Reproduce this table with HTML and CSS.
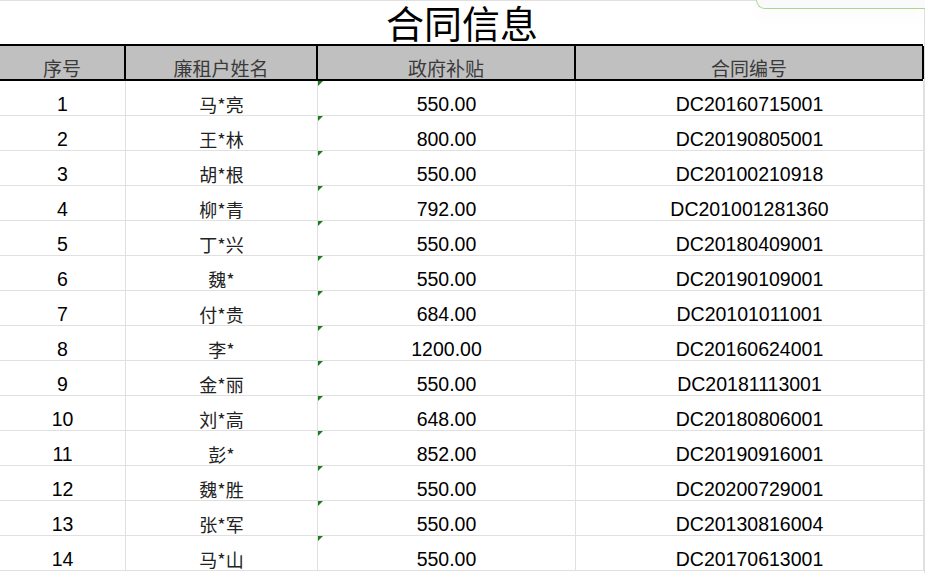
FILE: index.html
```html
<!DOCTYPE html>
<html lang="zh">
<head>
<meta charset="utf-8">
<link rel="stylesheet" href="styles.css">
</head>
<body>
<div class="sheet">
  <div class="tab-hint"></div>
  <div class="title">合同信息</div>
  <div class="row head">
    <div class="cell">序号</div>
    <div class="cell">廉租户姓名</div>
    <div class="cell">政府补贴</div>
    <div class="cell">合同编号</div>
  </div>
  <div class="row"><div class="cell num">1</div><div class="cell name">马*亮</div><div class="cell num mark">550.00</div><div class="cell num">DC20160715001</div></div>
  <div class="row"><div class="cell num">2</div><div class="cell name">王*林</div><div class="cell num mark">800.00</div><div class="cell num">DC20190805001</div></div>
  <div class="row"><div class="cell num">3</div><div class="cell name">胡*根</div><div class="cell num mark">550.00</div><div class="cell num">DC20100210918</div></div>
  <div class="row"><div class="cell num">4</div><div class="cell name">柳*青</div><div class="cell num mark">792.00</div><div class="cell num">DC201001281360</div></div>
  <div class="row"><div class="cell num">5</div><div class="cell name">丁*兴</div><div class="cell num mark">550.00</div><div class="cell num">DC20180409001</div></div>
  <div class="row"><div class="cell num">6</div><div class="cell name">魏*</div><div class="cell num mark">550.00</div><div class="cell num">DC20190109001</div></div>
  <div class="row"><div class="cell num">7</div><div class="cell name">付*贵</div><div class="cell num mark">684.00</div><div class="cell num">DC20101011001</div></div>
  <div class="row"><div class="cell num">8</div><div class="cell name">李*</div><div class="cell num mark">1200.00</div><div class="cell num">DC20160624001</div></div>
  <div class="row"><div class="cell num">9</div><div class="cell name">金*丽</div><div class="cell num mark">550.00</div><div class="cell num">DC20181113001</div></div>
  <div class="row"><div class="cell num">10</div><div class="cell name">刘*高</div><div class="cell num mark">648.00</div><div class="cell num">DC20180806001</div></div>
  <div class="row"><div class="cell num">11</div><div class="cell name">彭*</div><div class="cell num mark">852.00</div><div class="cell num">DC20190916001</div></div>
  <div class="row"><div class="cell num">12</div><div class="cell name">魏*胜</div><div class="cell num mark">550.00</div><div class="cell num">DC20200729001</div></div>
  <div class="row"><div class="cell num">13</div><div class="cell name">张*军</div><div class="cell num mark">550.00</div><div class="cell num">DC20130816004</div></div>
  <div class="row"><div class="cell num">14</div><div class="cell name">马*山</div><div class="cell num mark">550.00</div><div class="cell num">DC20170613001</div></div>
</div>
</body>
</html>
```

FILE: styles.css
```css
html, body {
  margin: 0;
  padding: 0;
  background: #fff;
  overflow: hidden;
}

.sheet {
  position: relative;
  width: 924px;
  min-height: 572px;
  border-right: 1px solid #e0e0e0;
  border-top: 1px solid #e0e0e0;
  font-family: "Liberation Sans", Arial, sans-serif;
}

.tab-hint {
  position: absolute;
  top: -1px;
  right: -1px;
  width: 168px;
  height: 8px;
  border: 1px solid #a9d890;
  border-top: none;
  border-right: none;
  border-bottom-left-radius: 9px;
  background: #fafafa;
  box-shadow: 0 6px 18px rgba(0, 0, 0, 0.035);
}

.title {
  height: 43px;
  line-height: 41px;
  text-align: center;
  font-family: "Noto Sans CJK SC", sans-serif;
  font-size: 38px;
  color: #000;
}

.row {
  display: grid;
  grid-template-columns: 126px 192px 258px 348px;
  height: 35px;
  box-sizing: border-box;
  border-bottom: 1px solid #e0e0e0;
}

.cell {
  position: relative;
  display: flex;
  align-items: flex-end;
  justify-content: center;
  border-right: 1px solid #e0e0e0;
  font-size: 19.5px;
  line-height: 21px;
  color: #000;
  white-space: nowrap;
}

.row.head {
  height: 37px;
  border-top: 2px solid #000;
  border-bottom: 2px solid #000;
  background: #c0c0c0;
  width: 923px;
}

.row.head .cell {
  border-right: 2px solid #000;
  font-family: "Noto Sans CJK SC", sans-serif;
  font-size: 19px;
  line-height: 20px;
  color: #3a3a3a;
  padding-bottom: 1px;
}

.name {
  font-family: "Noto Sans CJK SC", sans-serif;
  color: #222;
  font-size: 18px;
  line-height: 20px;
  padding-bottom: 1px;
}

.num {
  padding-bottom: 0;
}

.mark::before {
  content: "";
  position: absolute;
  top: 0;
  left: 0;
  width: 0;
  height: 0;
  border-top: 5px solid #1b7d1b;
  border-right: 5px solid transparent;
}
```
